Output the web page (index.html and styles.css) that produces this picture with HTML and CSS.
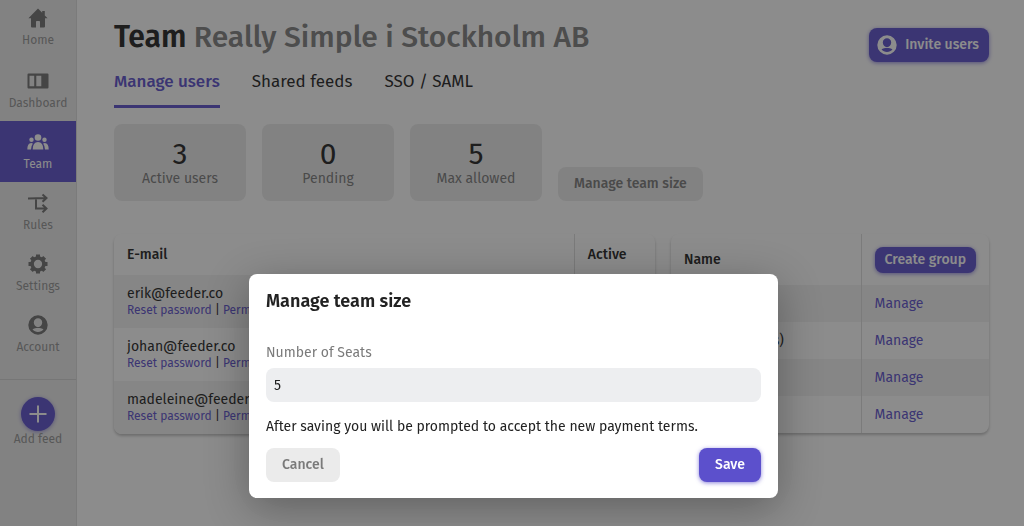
FILE: index.html
```
<!DOCTYPE html>
<html lang="en">
<head>
<meta charset="utf-8">
<meta name="viewport" content="width=device-width, initial-scale=1">
<title>Team – Manage users</title>
<link rel="stylesheet" href="styles.css">
</head>
<body>
<div class="app">
  <nav class="sidebar" aria-label="Main">
    <a class="nav-item" href="#home">
      <svg class="nav-icon" viewBox="0 0 20 20" aria-hidden="true"><path d="M10 0.6 0.4 10.2H3v8.2q0 1 1 1h4v-5.6q0-.8.8-.8h2.4q.8 0 .8.8v5.6h4q1 0 1-1v-8.2h2.6L16.8 7.400V3h-2.600v1.800z"/></svg>
      Home
    </a>
    <a class="nav-item" href="#dashboard">
      <svg class="nav-icon nav-icon-wide" viewBox="0 0 22 20" aria-hidden="true"><path fill-rule="evenodd" d="M1.500 2.500h19q1 0 1 1v13q0 1-1 1h-19q-1 0-1-1v-13q0-1 1-1zM2.500 4.700v10.600h4.700V4.700zM9.300 4.700v10.600h5V4.700z"/></svg>
      Dashboard
    </a>
    <a class="nav-item nav-item-active" href="#team" aria-current="page">
      <svg class="nav-icon nav-icon-wide" viewBox="0 0 22 20" aria-hidden="true"><circle cx="11" cy="5.500" r="3.300"/><circle cx="4.500" cy="7.800" r="2.200"/><circle cx="17.500" cy="7.800" r="2.200"/><path d="M5.700 17.500q0-7.500 5.300-7.500t5.300 7.500zM.3 17.500q0-6 3.900-6.400 1 0 1.700.4-1.700 2.200-1.900 6zM21.700 17.500q0-6-3.900-6.400-1 0-1.700.4 1.700 2.200 1.900 6z"/></svg>
      Team
    </a>
    <a class="nav-item" href="#rules">
      <svg class="nav-icon" viewBox="0 0 20 20" aria-hidden="true"><path class="line" d="M0 5.500 18.500 5M14.500 1.500l4 3.500-4 3.800M8 5.500v10h10.500M14.500 11.700l4 3.800-4 3.800"/></svg>
      Rules
    </a>
    <a class="nav-item" href="#settings">
      <svg class="nav-icon" viewBox="0 0 20 20" aria-hidden="true"><circle class="ring" cx="10" cy="10" r="5.900"/><path class="teeth" d="M10 .5v3M10 16.500v3M.5 10h3M16.500 10h3M3.300 3.300l2.100 2.100M14.600 14.600l2.100 2.100M3.300 16.700l2.100-2.100M14.600 5.400l2.100-2.100"/></svg>
      Settings
    </a>
    <a class="nav-item" href="#account">
      <svg class="nav-icon" viewBox="0 0 20 20" aria-hidden="true"><path fill-rule="evenodd" d="M10 .3a9.700 9.700 0 1 1 0 19.400A9.700 9.700 0 0 1 10 .3zM10 3.300a4.200 4.200 0 0 0-4.200 4.200c0 2.600 1.900 4.700 4.200 4.700s4.200-2.100 4.200-4.700A4.200 4.200 0 0 0 10 3.300zM4.500 14.300c1.400 1.700 3.300 2.700 5.500 2.700s4.100-1 5.500-2.700c-1.500-1-3.400-1.300-5.500-1.300s-4 .3-5.500 1.300z"/></svg>
      Account
    </a>
    <div class="add-feed">
      <a class="add-link" href="#add">
        <span class="add-circle"><svg class="add-plus" viewBox="0 0 18 18" aria-hidden="true"><path d="M9 0.500v17M.5 9h17"/></svg></span>
        Add feed
      </a>
    </div>
  </nav>

  <main class="main">
    <header class="page-header">
      <h1 class="page-title">Team <span class="team-name">Really Simple i Stockholm AB</span></h1>
      <button class="btn btn-primary btn-invite" type="button">
        <svg class="btn-icon" viewBox="0 0 20 20" aria-hidden="true"><path fill-rule="evenodd" d="M10 .3a9.700 9.700 0 1 1 0 19.400A9.700 9.700 0 0 1 10 .3zM10 3.300a4.200 4.200 0 0 0-4.200 4.200c0 2.600 1.900 4.700 4.200 4.700s4.200-2.100 4.200-4.700A4.200 4.200 0 0 0 10 3.300zM4.500 14.300c1.400 1.700 3.300 2.700 5.500 2.700s4.100-1 5.500-2.700c-1.500-1-3.400-1.300-5.500-1.300s-4 .3-5.500 1.300z"/></svg>
        Invite users
      </button>
    </header>

    <nav class="tabs" aria-label="Team sections">
      <a class="tab tab-active" href="#users" aria-current="page">Manage users</a>
      <a class="tab" href="#feeds">Shared feeds</a>
      <a class="tab" href="#sso">SSO / SAML</a>
    </nav>

    <section class="stats" aria-label="Seats">
      <div class="stat"><span class="stat-value">3</span><span class="stat-label">Active users</span></div>
      <div class="stat"><span class="stat-value">0</span><span class="stat-label">Pending</span></div>
      <div class="stat"><span class="stat-value">5</span><span class="stat-label">Max allowed</span></div>
      <button class="btn btn-muted" type="button">Manage team size</button>
    </section>

    <div class="tables">
      <table class="table users">
        <thead><tr><th class="col-email" scope="col">E-mail</th><th scope="col">Active</th></tr></thead>
        <tbody>
          <tr><td>erik@feeder.co<div class="actions"><a href="#reset">Reset password</a> | <a href="#permissions">Permissions</a></div></td><td></td></tr>
          <tr><td>johan@feeder.co<div class="actions"><a href="#reset">Reset password</a> | <a href="#permissions">Permissions</a></div></td><td></td></tr>
          <tr><td>madeleine@feeder.co<div class="actions"><a href="#reset">Reset password</a> | <a href="#permissions">Permissions</a></div></td><td></td></tr>
        </tbody>
      </table>
      <table class="table groups">
        <thead><tr><th class="col-name" scope="col">Name</th><th scope="col"><button class="btn btn-primary btn-small" type="button">Create group</button></th></tr></thead>
        <tbody>
          <tr><td></td><td><a href="#group">Manage</a></td></tr>
          <tr><td>Team (all users)</td><td><a href="#group">Manage</a></td></tr>
          <tr><td></td><td><a href="#group">Manage</a></td></tr>
          <tr><td></td><td><a href="#group">Manage</a></td></tr>
        </tbody>
      </table>
    </div>
  </main>
</div>

<div class="overlay">
  <form class="modal" role="dialog" aria-modal="true" aria-labelledby="modal-title">
    <h2 class="modal-title" id="modal-title">Manage team size</h2>
    <label class="field-label" for="seats">Number of Seats</label>
    <input class="field" id="seats" type="text" inputmode="numeric" value="5">
    <p class="modal-note">After saving you will be prompted to accept the new payment terms.</p>
    <div class="modal-actions">
      <button class="btn btn-muted" type="button">Cancel</button>
      <button class="btn btn-primary" type="submit">Save</button>
    </div>
  </form>
</div>
</body>
</html>
```
FILE: styles.css
```
:root {
  --purple: #5c50cc;
  --ink: #222;
  --grey: #7a7a7a;
  --icon: #707070;
  --soft: #ebebeb;
}

* { box-sizing: border-box; }

body {
  margin: 0;
  font: 14px/16px "Fira Sans", "Noto Sans", sans-serif;
  color: var(--ink);
  background: #fff;
}

a { color: var(--purple); text-decoration: none; }

.app { display: flex; min-height: 100vh; }

.sidebar {
  flex: 0 0 77px;
  background: var(--soft);
  border-right: 1px solid #dcdcdc;
}

.nav-item {
  display: flex;
  flex-direction: column;
  align-items: center;
  gap: 4px;
  height: 61px;
  padding-top: 11px;
  font-size: 12px;
  line-height: 16px;
  color: #949494;
}

.nav-item:first-child { height: 60px; padding-top: 8px; }

.nav-icon { width: 20px; height: 20px; fill: var(--icon); }
.nav-icon-wide { width: 22px; }
.nav-icon .line { fill: none; stroke: var(--icon); stroke-width: 2; }
.nav-icon .ring { fill: none; stroke: var(--icon); stroke-width: 3.5; }
.nav-icon .teeth { fill: none; stroke: var(--icon); stroke-width: 4; }

.nav-item-active { background: var(--purple); color: #fff; }
.nav-item-active .nav-icon { fill: #fff; }

.add-feed {
  margin-top: 14px;
  padding-top: 17px;
  border-top: 1px solid #d2d2d2;
}

.add-link {
  display: flex;
  flex-direction: column;
  align-items: center;
  font-size: 12px;
  color: #949494;
}

.add-circle {
  display: grid;
  place-items: center;
  width: 34px;
  height: 34px;
  border-radius: 50%;
  background: var(--purple);
  box-shadow: 0 1px 4px rgba(92, 80, 204, .6);
}

.add-plus { width: 18px; height: 18px; stroke: #fff; stroke-width: 2; }

.main { flex: 1; min-width: 0; padding: 16px 35px 16px 37px; }

.page-header {
  display: flex;
  justify-content: space-between;
  align-items: flex-start;
}

.page-title {
  margin: 0;
  font-size: 30px;
  line-height: 42px;
  font-weight: 600;
}

.team-name { font-weight: 500; color: #808080; }

.btn {
  display: inline-flex;
  align-items: center;
  justify-content: center;
  gap: 8px;
  height: 34px;
  padding: 0 16px;
  border: 0;
  border-radius: 8px;
  font: inherit;
  font-weight: 500;
  white-space: nowrap;
}

.btn-primary {
  background: var(--purple);
  color: #fff;
  box-shadow: 0 1px 4px rgba(92, 80, 204, .7);
}

.btn-muted { background: var(--soft); color: var(--grey); }
.btn-invite { margin-top: 12px; padding: 0 10px 0 8px; }
.btn-small { height: 26px; padding: 0 10px; }
.btn-icon { width: 20px; height: 20px; fill: #fff; }

.tabs { display: flex; gap: 32px; margin-top: 8px; }

.tab {
  padding-bottom: 11px;
  font-size: 17px;
  line-height: 24px;
  color: var(--ink);
}

.tab-active {
  border-bottom: 3px solid var(--purple);
  font-weight: 500;
  color: var(--purple);
}

.stats { display: flex; align-items: flex-end; gap: 16px; margin-top: 16px; }

.stat {
  display: flex;
  flex-direction: column;
  align-items: center;
  width: 132px;
  padding: 14px 8px;
  border-radius: 8px;
  background: var(--soft);
}

.stat-value { font-size: 30px; line-height: 33px; }
.stat-label { line-height: 16px; color: var(--grey); }

.tables { display: flex; align-items: flex-start; gap: 16px; margin-top: 33px; }

.table {
  border-collapse: separate;
  border-spacing: 0;
  table-layout: fixed;
  border-radius: 8px;
  box-shadow: 0 2px 3px rgba(0, 0, 0, .25);
  overflow: hidden;
}

.users { flex: 541; }
.groups { flex: 318; }
.col-email { width: 85%; }
.col-name { width: 60%; }

.table th, .table td {
  padding: 0 13px;
  text-align: left;
  white-space: nowrap;
}

.table th { height: 51px; font-weight: 500; }
.table th + th, .table td + td { border-left: 1px solid #dcdcdc; }
.users th { height: 41px; }
.users td { height: 53px; }
.groups td { height: 37px; }
.table tbody tr:nth-child(odd) { background: #f3f3f3; }
.actions { font-size: 12px; }

.overlay {
  position: fixed;
  inset: 0;
  display: flex;
  align-items: flex-end;
  justify-content: center;
  padding: 0 16px 28px 19px;
  background: rgba(26, 26, 26, .5);
}

.modal {
  width: 100%;
  max-width: 529px;
  padding: 16px 17px;
  border-radius: 8px;
  background: #fff;
  box-shadow: 0 10px 44px rgba(0, 0, 0, .32);
}

.modal-title { margin: 0; font-size: 18px; line-height: 22px; font-weight: 600; }

.field-label { display: block; margin-top: 33px; color: var(--grey); }

.field {
  display: block;
  width: 100%;
  height: 34px;
  margin-top: 7px;
  padding: 0 8px;
  border: 0;
  border-radius: 8px;
  background: #edeef0;
  font: inherit;
  color: var(--ink);
}

.modal-note { margin: 17px 0 0; }

.modal-actions { display: flex; justify-content: space-between; margin-top: 13px; }
```
